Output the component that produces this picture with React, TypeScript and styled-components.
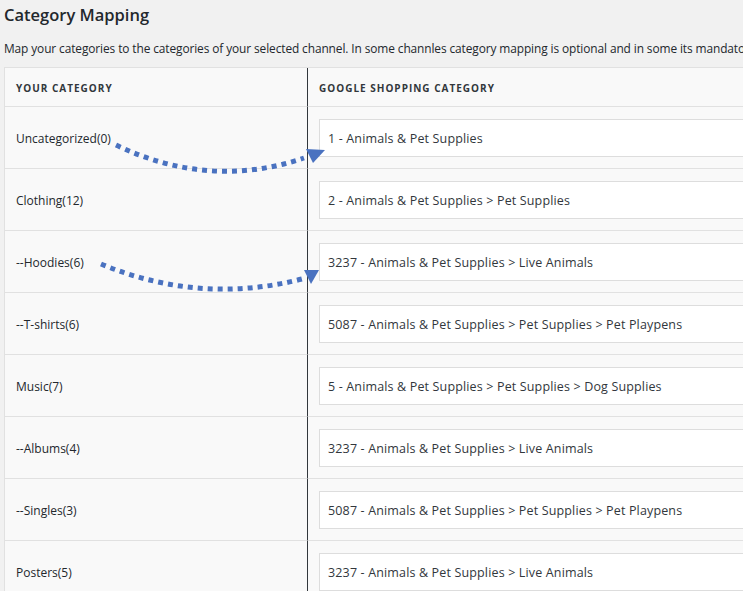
import { createGlobalStyle } from 'styled-components'
import styled from 'styled-components'

const Global = createGlobalStyle`
  body { margin: 0; background: #f1f1f1; font-family: "Open Sans", "Noto Sans", sans-serif; color: #23282d; }
`

const Page = styled.div`
  position: relative;
  padding: 4px 0 0 4px;
  width: 743px;
  height: 591px;
  overflow: hidden;
  box-sizing: border-box;
`
const Title = styled.h2`
  margin: 0;
  font-size: 16.5px;
  font-weight: 600;
  line-height: 22px;
`
const Desc = styled.p`
  margin: 13px 0 10px;
  font-size: 11.9px;
  letter-spacing: -0.1px;
  line-height: 18px;
  white-space: nowrap;
`
const Table = styled.div`
  display: grid;
  grid-template-columns: 302px 1fr;
  border-top: 1px solid #e1e1e1;
  border-left: 1px solid #e1e1e1;
  width: 760px;
  background: #f9f9f9;
`
const Cell = styled.div<{ $right?: boolean; $head?: boolean }>`
  height: ${p => (p.$head ? 37 : 60)}px;
  border-bottom: 1px solid #e1e1e1;
  border-left: ${p => (p.$right ? '1px solid #32373c' : 'none')};
  display: flex;
  align-items: center;
  padding-left: 11px;
  padding-top: 1px;
  box-sizing: content-box;
  font-size: ${p => (p.$head ? '10px' : '12px')};
  font-weight: ${p => (p.$head ? 700 : 400)};
  letter-spacing: ${p => (p.$head ? '1px' : '0')};
  color: ${p => (p.$head ? '#32373c' : '#23282d')};
`
const Input = styled.div`
  flex: 1;
  height: 36px;
  background: #fff;
  border: 1px solid #ddd;
  border-right: none;
  display: flex;
  align-items: center;
  padding-left: 8px;
  font-size: 12.5px;
  letter-spacing: 0.15px;
  color: #32373c;
`
const Overlay = styled.svg`
  position: absolute;
  left: 0;
  top: 0;
  pointer-events: none;
`

const rows: [string, string][] = [
  ['Uncategorized(0)', '1 - Animals & Pet Supplies'],
  ['Clothing(12)', '2 - Animals & Pet Supplies > Pet Supplies'],
  ['--Hoodies(6)', '3237 - Animals & Pet Supplies > Live Animals'],
  ['--T-shirts(6)', '5087 - Animals & Pet Supplies > Pet Supplies > Pet Playpens'],
  ['Music(7)', '5 - Animals & Pet Supplies > Pet Supplies > Dog Supplies'],
  ['--Albums(4)', '3237 - Animals & Pet Supplies > Live Animals'],
  ['--Singles(3)', '5087 - Animals & Pet Supplies > Pet Supplies > Pet Playpens'],
  ['Posters(5)', '3237 - Animals & Pet Supplies > Live Animals'],
]

function Arrow({ d, head }: { d: string; head: string }) {
  return (
    <g>
      <path d={d} fill="none" stroke="#4a72c0" strokeWidth="5" strokeDasharray="5 5" strokeLinecap="butt" />
      <polygon points={head} fill="#4a72c0" />
    </g>
  )
}

export default function App() {
  return (
    <Page>
      <Global />
      <Title>Category Mapping</Title>
      <Desc>Map your categories to the categories of your selected channel. In some channles category mapping is optional and in some its mandatory.</Desc>
      <Table>
        <Cell $head>YOUR CATEGORY</Cell>
        <Cell $head $right>GOOGLE SHOPPING CATEGORY</Cell>
        {rows.map(([a, b]) => (
          <>
            <Cell key={a}>{a}</Cell>
            <Cell $right><Input>{b}</Input></Cell>
          </>
        ))}
      </Table>
      <Overlay width="743" height="591">
        <Arrow d="M116 145 Q210 190 304 158" head="306,149 325,150 313,163" />
        <Arrow d="M101 264 Q200 305 302 279" head="304,270 319,270 311,284" />
      </Overlay>
    </Page>
  )
}
